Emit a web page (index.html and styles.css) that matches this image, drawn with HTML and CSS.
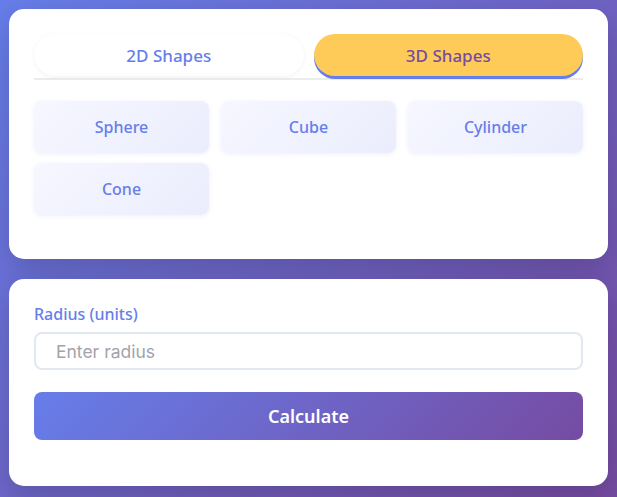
FILE: index.html
```html
<!DOCTYPE html>
<html lang="en">
<head>
<meta charset="utf-8">
<title>Shape Calculator</title>
<link rel="stylesheet" href="styles.css">
</head>
<body>
<main class="app">
  <section class="card shapes-card">
    <div class="tabs">
      <button class="tab">2D Shapes</button>
      <button class="tab tab-active">3D Shapes</button>
    </div>
    <div class="shape-grid">
      <button class="shape-btn">Sphere</button>
      <button class="shape-btn">Cube</button>
      <button class="shape-btn">Cylinder</button>
      <button class="shape-btn">Cone</button>
    </div>
  </section>
  <section class="card input-card">
    <label class="field-label" for="radius">Radius (units)</label>
    <input class="field-input" id="radius" type="text" placeholder="Enter radius">
    <button class="calc-btn">Calculate</button>
  </section>
</main>
</body>
</html>
```

FILE: styles.css
```css
* { box-sizing: border-box; }
html, body { margin: 0; height: 100%; }
body {
  background: linear-gradient(135deg, #667eea 0%, #764ba2 100%);
  font-family: "Noto Sans", "Open Sans", sans-serif;
  padding: 9px;
}
.app {
  display: flex;
  flex-direction: column;
  gap: 20px;
}
.card {
  background: #fff;
  border-radius: 15px;
  box-shadow: 0 10px 30px rgba(0, 0, 0, 0.18);
}
.shapes-card {
  padding: 25px 25px 44px;
}
.tabs {
  display: flex;
  gap: 10px;
  padding-bottom: 2px;
  border-bottom: 2px solid #ececec;
  margin-bottom: 21px;
}
.tab {
  flex: 1;
  height: 42px;
  border: none;
  border-radius: 21px;
  background: #fff;
  box-shadow: 0 1px 4px rgba(0, 0, 0, 0.06);
  font-family: inherit;
  font-size: 17px;
  font-weight: 500;
  color: #667eea;
  cursor: pointer;
}
.tab-active {
  background: #fecb58;
  color: #764ba2;
  box-shadow: 0 3px 0 #667eea;
}
.shape-grid {
  display: grid;
  grid-template-columns: repeat(3, 1fr);
  gap: 10px 12px;
}
.shape-btn {
  height: 52px;
  border: none;
  border-radius: 8px;
  background: linear-gradient(135deg, #f6f7ff 0%, #ebedfd 100%);
  box-shadow: 0 1px 4px rgba(102, 126, 234, 0.12);
  font-family: inherit;
  font-size: 16px;
  font-weight: 500;
  color: #667eea;
  cursor: pointer;
}
.input-card {
  padding: 25px 25px 46px;
  display: flex;
  flex-direction: column;
}
.field-label {
  font-size: 16px;
  font-weight: 500;
  color: #667eea;
  line-height: 20px;
  margin-bottom: 8px;
}
.field-input {
  height: 38px;
  border: 2px solid #e2e8f0;
  border-radius: 8px;
  padding: 0 20px;
  font-family: "Inter", sans-serif;
  font-size: 17.5px;
  color: #333;
  outline: none;
  margin-bottom: 22px;
}
.field-input::placeholder { color: #a3a3ab; }
.calc-btn {
  height: 48px;
  border: none;
  border-radius: 8px;
  background: linear-gradient(135deg, #667eea 0%, #764ba2 100%);
  color: #fff;
  font-family: inherit;
  font-size: 18px;
  font-weight: 600;
  cursor: pointer;
}
```
